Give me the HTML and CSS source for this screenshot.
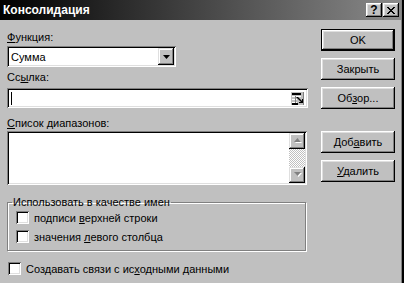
FILE: index.html
```html
<!DOCTYPE html>
<html lang="ru">

<head>
    <meta charset="UTF-8">
    <title>Консолидация</title>
    <link rel="stylesheet" href="styles.css">
</head>

<body>
    <div class="window">
        <div class="titlebar">
            <span class="title">Консолидация</span>
            <div class="title-btns">
                <span class="tbtn help">?</span>
                <span class="tbtn">
                    <svg width="8" height="7" viewBox="0 0 8 7">
                        <path d="M0 0h2v1h1v1h2v-1h1v-1h2v1h-1v1h-1v1h-1v1h1v1h1v1h1v1h-2v-1h-1v-1h-2v1h-1v1h-2v-1h1v-1h1v-1h1v-1h-1v-1h-1v-1h-1z" fill="#000"/>
                    </svg>
                </span>
            </div>
        </div>
        <div class="content">
            <div class="main">
                <div class="lbl lbl-func"><u>Ф</u>ункция:</div>
                <div class="combo field">
                    <span class="combo-value">Сумма</span>
                    <span class="drop raised">
                        <svg width="7" height="4" viewBox="0 0 7 4"><path d="M0 0h7l-3.5 4z" fill="#000"/></svg>
                    </span>
                </div>
                <div class="lbl lbl-ref">Сс<u>ы</u>лка:</div>
                <div class="ref field">
                    <span class="caret"></span>
                    <span class="ref-icon">
                        <svg width="13" height="13" viewBox="0 0 13 13">
                            <rect x="0" y="0" width="13" height="13" fill="#c0c0c0"/>
                            <rect x="1" y="1" width="9" height="2" fill="#000"/>
                            <rect x="1" y="4" width="9" height="1" fill="#fff"/>
                            <rect x="1" y="7" width="5" height="1" fill="#fff"/>
                            <rect x="1" y="10" width="5" height="1" fill="#fff"/>
                            <rect x="4" y="4" width="1" height="7" fill="#808080"/>
                            <rect x="1" y="11" width="6" height="2" fill="#000"/>
                            <path d="M5 5h2l4 4v-2h1v4h-4v-1h2l-4-4z" fill="#000"/>
                            <rect x="12" y="0" width="1" height="13" fill="#808080"/>
                        </svg>
                    </span>
                </div>
                <div class="lbl lbl-list"><u>С</u>писок диапазонов:</div>
                <div class="list field">
                    <div class="scroll">
                        <span class="sbtn raised">
                            <svg width="9" height="6" viewBox="0 0 9 6">
                                <path d="M2 5h7l-3.5-4z" fill="#fff"/>
                                <path d="M1 4h7l-3.5-4z" fill="#808080"/>
                            </svg>
                        </span>
                        <span class="track"></span>
                        <span class="sbtn raised">
                            <svg width="9" height="6" viewBox="0 0 9 6">
                                <path d="M2 1h7l-3.5 4z" fill="#fff"/>
                                <path d="M1 0h7l-3.5 4z" fill="#808080"/>
                            </svg>
                        </span>
                    </div>
                </div>
                <fieldset class="group">
                    <legend>Использовать в качестве имен</legend>
                    <div class="check"><span class="box"></span><span>подписи <u>в</u>ерхней строки</span></div>
                    <div class="check"><span class="box"></span><span>значения <u>л</u>евого столбца</span></div>
                </fieldset>
                <div class="check links"><span class="box"></span><span>Создавать связи с ис<u>х</u>одными данными</span></div>
            </div>
            <div class="side">
                <button class="btn default">OK</button>
                <button class="btn">Закрыть</button>
                <button class="btn">Об<u>з</u>ор...</button>
                <button class="btn add">Доб<u>а</u>вить</button>
                <button class="btn"><u>У</u>далить</button>
            </div>
        </div>
    </div>
</body>

</html>
```

FILE: styles.css
```css
* {
    box-sizing: border-box;
}

body {
    margin: 0;
    background: #c0c0c0;
    font-family: "Liberation Sans", Arial, sans-serif;
    font-size: 11px;
    color: #000;
}

u {
    text-decoration-thickness: 1px;
    text-underline-offset: 1px;
}

.window {
    width: 404px;
    height: 283px;
    background: #c0c0c0;
    box-shadow: inset -1px 0 #000, inset -2px 0 #000, inset -3px 0 #808080;
}

.titlebar {
    height: 20px;
    margin-right: 3px;
    display: flex;
    align-items: center;
    justify-content: space-between;
    padding: 0 2px 0 3px;
    background: linear-gradient(to right, #000 0%, #2a2a2a 30%, #8a8a8a 100%);
}

.title {
    color: #fff;
    font-weight: bold;
    font-size: 12px;
}

.title-btns {
    display: flex;
    gap: 1px;
}

.tbtn {
    width: 16px;
    height: 14px;
    display: flex;
    align-items: center;
    justify-content: center;
    background: #c0c0c0;
    box-shadow: inset -1px -1px #000, inset 1px 1px #fff, inset -2px -2px #808080, inset 2px 2px #dfdfdf;
}

.help {
    font-weight: bold;
    font-size: 12px;
    line-height: 14px;
}

.raised {
    background: #c0c0c0;
    box-shadow: inset -1px -1px #000, inset 1px 1px #dfdfdf, inset -2px -2px #808080, inset 2px 2px #fff;
}

.field {
    background: #fff;
    box-shadow: inset 1px 1px #808080, inset -1px -1px #fff, inset 2px 2px #000, inset -2px -2px #dfdfdf;
}

.content {
    display: flex;
}

.main {
    width: 321px;
    padding-left: 7px;
}

.lbl {
    height: 13px;
    line-height: 13px;
}

.lbl-func {
    margin-top: 11px;
    margin-bottom: 2px;
}

.lbl-ref {
    margin-top: 4px;
    margin-bottom: 4px;
}

.lbl-list {
    margin-top: 9px;
    margin-bottom: 1px;
}

.combo {
    width: 169px;
    height: 21px;
    display: flex;
    align-items: center;
    justify-content: space-between;
    padding: 2px;
}

.combo-value {
    padding-left: 2px;
}

.drop {
    width: 16px;
    height: 17px;
    display: flex;
    align-items: center;
    justify-content: center;
}

.ref {
    width: 301px;
    height: 20px;
    display: flex;
    align-items: center;
    justify-content: space-between;
    padding: 2px 4px 2px 4px;
}

.caret {
    width: 1px;
    height: 13px;
    background: #000;
}

.ref-icon {
    display: flex;
}

.list {
    width: 300px;
    height: 54px;
    display: flex;
    justify-content: flex-end;
    padding: 2px;
}

.scroll {
    width: 16px;
    display: flex;
    flex-direction: column;
}

.sbtn {
    height: 16px;
    display: flex;
    align-items: center;
    justify-content: center;
}

.track {
    flex: 1;
    background: repeating-conic-gradient(#fff 0 25%, #c0c0c0 0 50%) 0 0 / 2px 2px;
}

.group {
    width: 299px;
    height: 55px;
    margin: 11px 0 0 0;
    padding: 0 0 0 8px;
    border: 1px solid #808080;
    box-shadow: 1px 1px 0 #fff, inset 1px 1px 0 #fff;
}

.group legend {
    padding: 0 1px;
    margin-left: -4px;
    line-height: 13px;
}

.check {
    display: flex;
    align-items: center;
    height: 13px;
    margin-top: 2px;
}

.check + .check {
    margin-top: 6px;
}

.box {
    width: 13px;
    height: 13px;
    margin-right: 5px;
    background: #fff;
    box-shadow: inset 1px 1px #808080, inset -1px -1px #fff, inset 2px 2px #000, inset -2px -2px #dfdfdf;
}

.links {
    margin-top: 11px;
    margin-left: 1px;
}

.side {
    display: flex;
    flex-direction: column;
    padding-top: 9px;
    gap: 7px;
}

.btn {
    width: 74px;
    height: 22px;
    padding: 0;
    border: none;
    font: inherit;
    color: #000;
    background: #c0c0c0;
    box-shadow: inset -1px -1px #000, inset 1px 1px #fff, inset -2px -2px #808080, inset 2px 2px #dfdfdf;
}

.btn.default {
    box-shadow: inset 0 0 0 1px #000, inset -2px -2px #000, inset 2px 2px #fff, inset -3px -3px #808080, inset 3px 3px #dfdfdf;
}

.btn.add {
    margin-top: 15px;
}
```
